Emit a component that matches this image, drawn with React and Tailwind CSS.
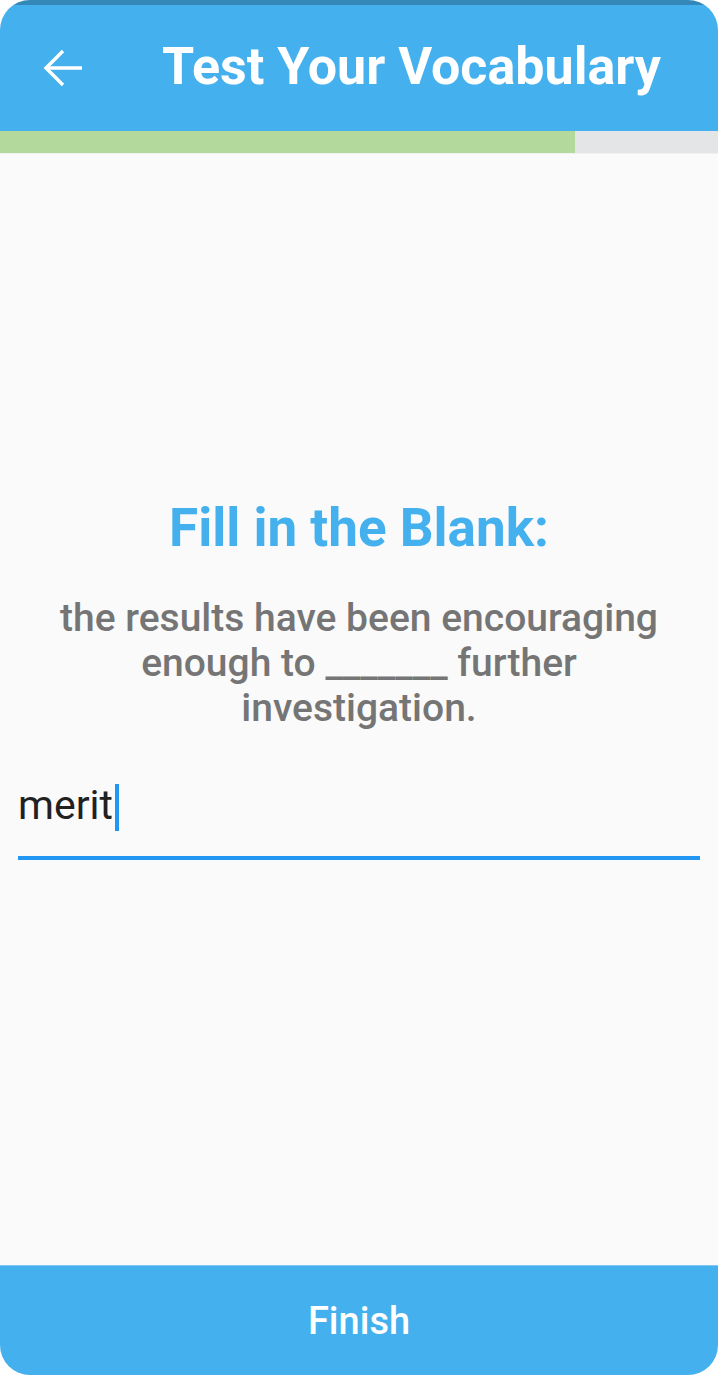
import React from "react";

export default function App() {
  return (
    <div className="w-[719px] h-[1375px] bg-white font-['Roboto',sans-serif]">
      <div className="w-[718px] h-[1375px] rounded-[30px] overflow-hidden bg-[#fafafa] flex flex-col">
        {/* STATUS STRIP + APP BAR */}
        <div className="h-[5px] bg-[#3388b8] shrink-0" />
        <header className="h-[126px] bg-[#44b0ee] flex items-center shrink-0">
          <div className="w-[162px] flex items-center pl-[43px]">
            <svg width="40" height="38" viewBox="0 0 40 38" fill="none" stroke="white" strokeWidth="3.4">
              <path d="M3 19H39" />
              <path d="M20 2L3 19L20 36" strokeLinejoin="miter" />
            </svg>
          </div>
          <h1 className="text-white font-bold text-[52px] leading-none pb-[2px]">Test Your Vocabulary</h1>
        </header>

        {/* PROGRESS */}
        <div className="h-[23px] bg-[#e4e5e7] flex shrink-0 border-b border-[#f0f0f0]">
          <div className="w-[575px] bg-[#b3d99d]" />
        </div>

        {/* QUESTION */}
        <main className="flex-1 flex flex-col">
          <h2 className="mt-[344px] text-center text-[#44b0ee] font-bold text-[53px] leading-[60px]">Fill in the Blank:</h2>
          <p className="mt-[38px] px-[45px] text-center text-[#757575] font-medium text-[39px] leading-[45px]">
            the results have been encouraging enough to _______ further investigation.
          </p>

          <div className="mx-[18px] mt-[47px] border-b-4 border-[#2196f3] pb-[25px] flex items-center">
            <span className="text-[#212121] text-[41px] leading-[48px]">merit</span>
            <span className="w-[4px] h-[47px] bg-[#2196f3] ml-[2px] mt-[6px]" />
          </div>
        </main>

        {/* FINISH */}
        <button className="h-[110px] shrink-0 bg-[#44b0ee] border-t border-[#7cc8f2] flex items-center justify-center">
          <span className="text-white font-medium text-[38px] leading-none">Finish</span>
        </button>
      </div>
    </div>
  );
}
